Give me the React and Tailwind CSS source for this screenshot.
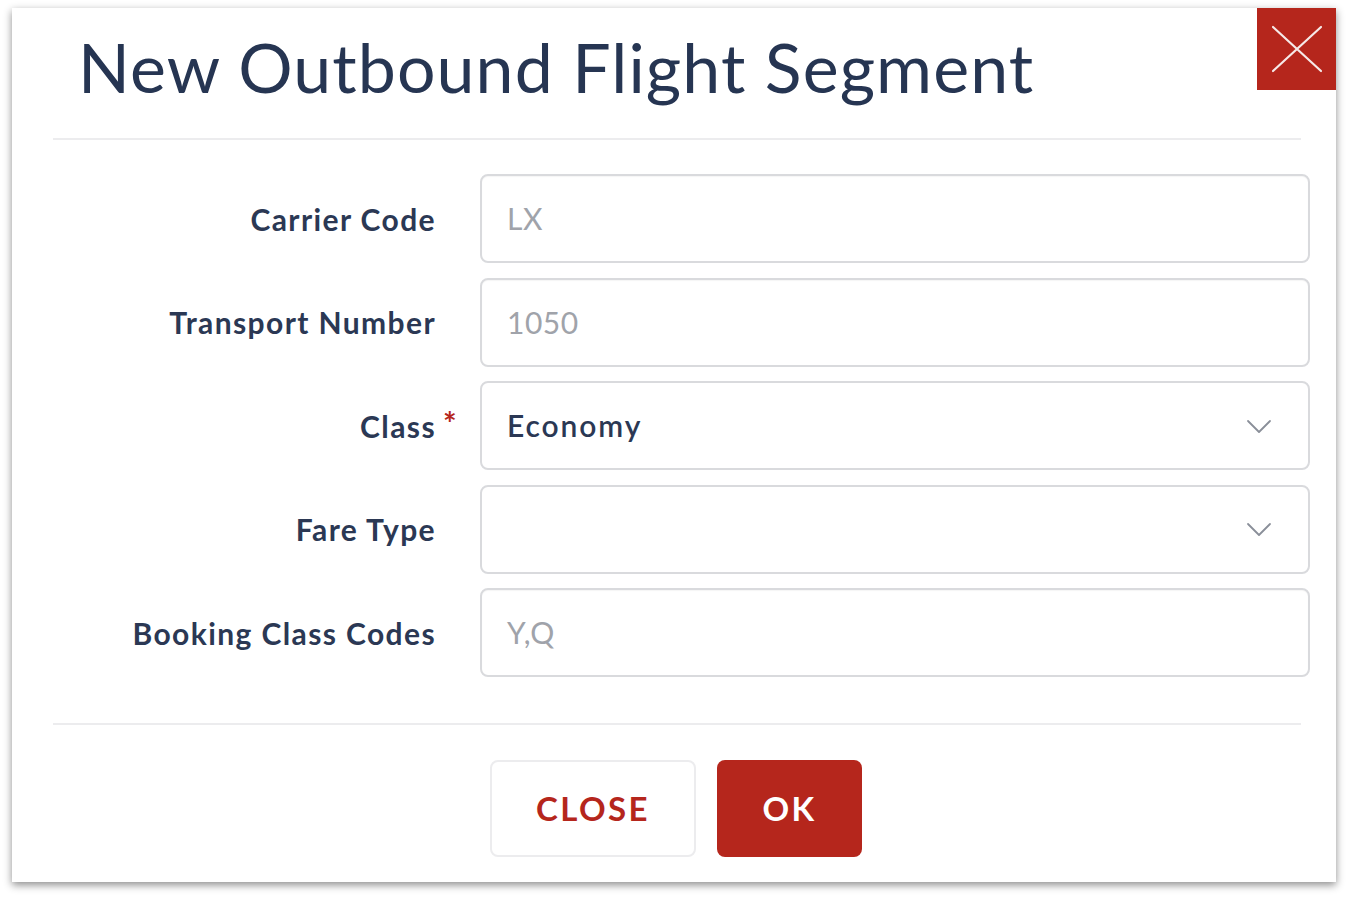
import { useState } from 'react'

const Chevron = () => (
  <svg width="26" height="16" viewBox="0 0 26 16" fill="none" className="shrink-0">
    <path d="M2 3 L13 14 L24 3" stroke="#8a8f99" strokeWidth="1.8" strokeLinecap="round" strokeLinejoin="round" />
  </svg>
)

const Row = ({ label, required, children }) => (
  <div className="flex items-center h-[89px]">
    <div className="w-[424px] shrink-0 flex justify-end items-center">
      <span className="relative text-[30px] font-bold text-[#2b3854] leading-none tracking-[1.4px]">
        {label}
        {required && (
          <span className="absolute left-full ml-[7px] top-[-3px] text-[32px] font-bold text-[#b5261c] tracking-normal">*</span>
        )}
      </span>
    </div>
    <div className="ml-[44px] flex-1 h-full">{children}</div>
  </div>
)

const TextField = ({ value, placeholder }) => (
  <div className="h-full w-full rounded-[8px] border-2 border-[#d9dadd] bg-white flex items-center px-[25px] shadow-[inset_0_1px_1px_rgba(0,0,0,0.04)]">
    <span className="text-[30px] text-[#a0a3aa] tracking-[0.5px]">{value || placeholder}</span>
  </div>
)

const SelectField = ({ value }) => (
  <div className="h-full w-full rounded-[8px] border-2 border-[#d9dadd] bg-white flex items-center justify-between pl-[25px] pr-[36px]">
    <span className="text-[30px] font-semibold text-[#2b3854] tracking-[1.9px]">{value}</span>
    <Chevron />
  </div>
)

export default function App() {
  const [form] = useState({
    carrier: 'LX',
    transport: '1050',
    cls: 'Economy',
    fare: '',
    booking: 'Y,Q'
  })

  return (
    <div className="min-h-screen bg-white pl-[12px] pt-[8px]" style={{ fontFamily: 'Lato, "Open Sans", sans-serif' }}>
      <div className="relative w-[1324px] h-[874px] bg-white shadow-[0_3px_8px_rgba(0,0,0,0.45)] flex flex-col">

        {/* Close box */}
        <button className="absolute top-0 right-0 w-[79px] h-[82px] bg-[#b5261c] flex items-center justify-center">
          <svg width="54" height="50" viewBox="0 0 54 50">
            <path d="M3 3 L51 47 M51 3 L3 47" stroke="#f6e9e8" strokeWidth="2.2" strokeLinecap="round" />
          </svg>
        </button>

        {/* Header */}
        <div className="h-[130px] flex items-center pl-[66px] pb-[12px]">
          <h1 className="text-[68px] font-normal text-[#263552] leading-none tracking-[1.1px]">New Outbound Flight Segment</h1>
        </div>
        <div className="ml-[41px] mr-[35px] h-[2px] bg-[#ececee]" />

        {/* Form */}
        <div className="pt-[34px] pr-[26px] flex flex-col gap-[14.5px]">
          <Row label="Carrier Code">
            <TextField placeholder={form.carrier} />
          </Row>
          <Row label="Transport Number">
            <TextField placeholder={form.transport} />
          </Row>
          <Row label="Class" required>
            <SelectField value={form.cls} />
          </Row>
          <Row label="Fare Type">
            <SelectField value={form.fare} />
          </Row>
          <Row label="Booking Class Codes">
            <TextField placeholder={form.booking} />
          </Row>
        </div>

        <div className="mt-[46px] ml-[41px] mr-[35px] h-[2px] bg-[#ececee]" />

        {/* Actions */}
        <div className="pt-[35px] flex justify-center gap-[21px] pl-[4px]">
          <button className="w-[206px] h-[97px] rounded-[8px] border-2 border-[#ececee] bg-white text-[33px] font-bold text-[#b5261c] tracking-[2.4px]">
            CLOSE
          </button>
          <button className="w-[145px] h-[97px] rounded-[8px] bg-[#b5261c] text-[33px] font-bold text-white tracking-[2.4px]">
            OK
          </button>
        </div>
      </div>
    </div>
  )
}
